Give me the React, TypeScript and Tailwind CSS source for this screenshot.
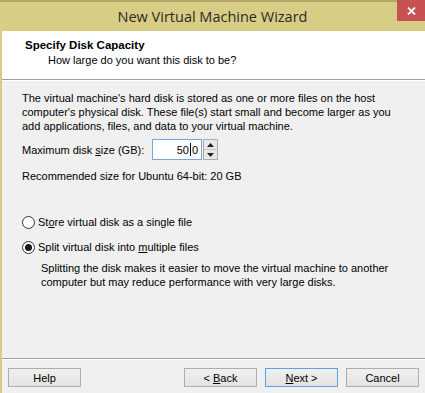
import React from "react";

const body = "font-['Liberation_Sans',Arial,sans-serif] text-[11px] text-[#000] leading-[14px]";

const Btn = ({
  children,
  primary,
  className,
}: {
  children: React.ReactNode;
  primary?: boolean;
  className?: string;
}) => (
  <div
    className={`flex h-[19px] w-[73px] items-center justify-center border bg-gradient-to-b from-[#f0f0f0] to-[#e3e3e3] ${
      primary ? "border-[#5ea2e6]" : "border-[#adadad]"
    } ${className ?? ""}`}
  >
    <span className="pt-px">{children}</span>
  </div>
);

const Radio = ({ checked }: { checked?: boolean }) => (
  <div className="flex h-[13px] w-[13px] items-center justify-center rounded-full border border-[#333] bg-white">
    {checked && <div className="h-[7px] w-[7px] rounded-full bg-[#1a1a1a]" />}
  </div>
);

export default function App() {
  return (
    <div className="flex h-[393px] w-[425px] flex-col overflow-hidden bg-[#d8cd84]">
      {/* title bar */}
      <div className="relative flex h-[31px] shrink-0 items-center justify-center border-t-2 border-[#b3a862]">
        <span className="font-['Open_Sans',sans-serif] text-[14.5px] text-[#2a2a2a]">
          New Virtual Machine Wizard
        </span>
        <div className="absolute -top-[2px] right-0 flex h-[21px] w-[28px] items-center justify-center bg-[#c75050]">
          <svg width="9" height="8" viewBox="0 0 9 8">
            <path d="M1 0.5 L8 7.5 M8 0.5 L1 7.5" stroke="#fff" strokeWidth="1.8" />
          </svg>
        </div>
      </div>

      <div className={`ml-[2px] flex flex-1 flex-col bg-[#f0f0f0] ${body}`}>
        {/* header */}
        <div className="h-[49px] shrink-0 border-b border-[#a0a0a0] bg-white pl-[23px] pt-[7px]">
          <div className="font-bold leading-[14px] text-[11.5px]">Specify Disk Capacity</div>
          <div className="pl-[23px] pt-[1px]">How large do you want this disk to be?</div>
        </div>
        <div className="h-px bg-white" />

        {/* content */}
        <div className="flex flex-1 flex-col pl-[20px] pt-[10px]">
          <p>
            The virtual machine's hard disk is stored as one or more files on the host
            <br />
            computer's physical disk. These file(s) start small and become larger as you
            <br />
            add applications, files, and data to your virtual machine.
          </p>

          <div className="mt-[6px] flex items-center">
            <span className="w-[130px]">
              Maximum disk <span className="underline">s</span>ize (GB):
            </span>
            <div className="flex h-[21px] w-[50px] items-center justify-end border border-[#7aa7dc] bg-white pr-[3px]">
              <span>50</span>
              <span className="mx-[1px] h-[13px] w-px bg-black" />
              <span>0</span>
            </div>
            <div className="ml-px flex h-[21px] w-[15px] flex-col border border-[#acacac] bg-[#f0f0f0]">
              <div className="flex flex-1 items-center justify-center border-b border-[#c8c8c8] bg-[#e8e8e8]">
                <svg width="7" height="4" viewBox="0 0 7 4">
                  <path d="M0 4 L3.5 0 L7 4 Z" fill="#222" />
                </svg>
              </div>
              <div className="flex flex-1 items-center justify-center bg-[#e8e8e8]">
                <svg width="7" height="4" viewBox="0 0 7 4">
                  <path d="M0 0 L3.5 4 L7 0 Z" fill="#222" />
                </svg>
              </div>
            </div>
          </div>

          <div className="mt-[9px]">Recommended size for Ubuntu 64-bit: 20 GB</div>

          <div className="mt-[32px] flex items-center gap-[3px]">
            <Radio />
            <span>
              St<span className="underline">o</span>re virtual disk as a single file
            </span>
          </div>
          <div className="mt-[11px] flex items-center gap-[3px]">
            <Radio checked />
            <span>
              Split virtual disk into <span className="underline">m</span>ultiple files
            </span>
          </div>
          <p className="mt-[7px] pl-[19px]">
            Splitting the disk makes it easier to move the virtual machine to another
            <br />
            computer but may reduce performance with very large disks.
          </p>
        </div>

        {/* footer */}
        <div className="h-px bg-[#a0a0a0]" />
        <div className="h-px bg-white" />
        <div className="flex h-[33px] shrink-0 items-start pl-[6px] pt-[8px]">
          <Btn>Help</Btn>
          <div className="flex-1" />
          <Btn>
            &lt; <span className="underline">B</span>ack
          </Btn>
          <Btn primary className="ml-[8px]">
            <span className="underline">N</span>ext &gt;
          </Btn>
          <Btn className="ml-[8px] mr-[6px]">Cancel</Btn>
        </div>
      </div>
    </div>
  );
}
